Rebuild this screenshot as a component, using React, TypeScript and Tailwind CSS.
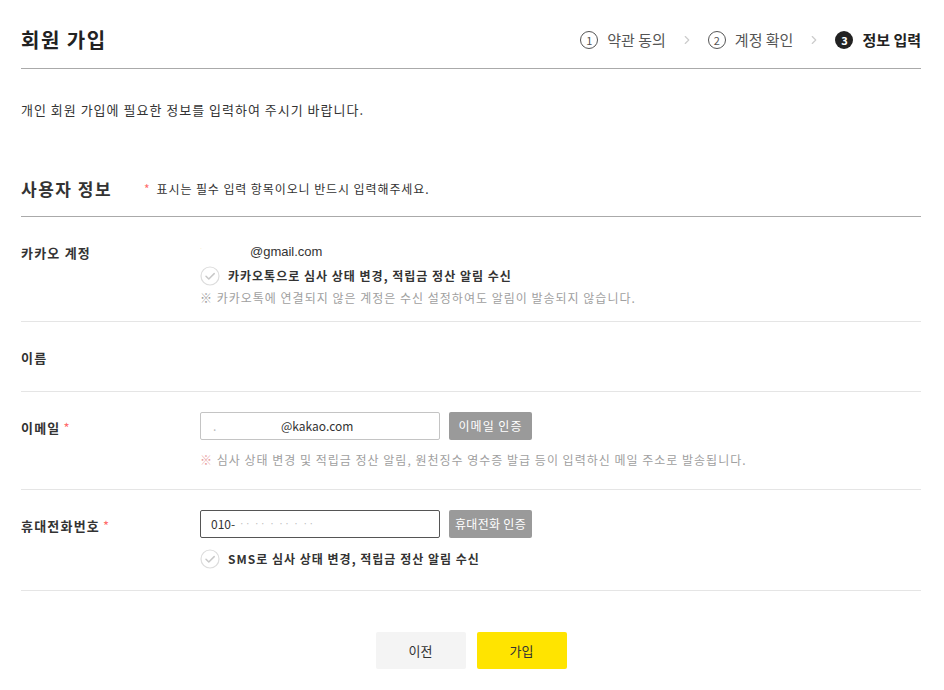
import { ChevronRight } from 'lucide-react';

const font = { fontFamily: '"Noto Sans CJK KR", "Noto Sans", sans-serif' };

function Step({ n, label, active }: { n: number; label: string; active?: boolean }) {
  return (
    <div className="flex items-center gap-[9px]">
      {active ? (
        <span className="flex h-[18px] w-[18px] items-center justify-center rounded-full bg-[#222] text-[11px] font-bold leading-none text-white">
          {n}
        </span>
      ) : (
        <span className="flex h-[18px] w-[18px] items-center justify-center rounded-full border border-[#555] text-[11px] leading-none text-[#555]">
          {n}
        </span>
      )}
      <span className={active ? 'text-[15px] font-bold text-[#222]' : 'text-[15px] text-[#555]'}>{label}</span>
    </div>
  );
}

function Check() {
  return (
    <svg width="20" height="20" viewBox="0 0 20 20" className="shrink-0">
      <circle cx="10" cy="10" r="9" fill="#fff" stroke="#ddd" strokeWidth="1.2" />
      <path d="M6 10.2l2.8 2.8L14.2 7.6" fill="none" stroke="#c8c8c8" strokeWidth="1.5" strokeLinecap="round" strokeLinejoin="round" />
    </svg>
  );
}

function Label({ children, required }: { children: React.ReactNode; required?: boolean }) {
  return (
    <div className="w-[179px] shrink-0 text-[13px] font-bold tracking-[1.2px] text-[#333]">
      {children}
      {required && <span className="ml-[3px] font-normal text-[#ff6b6b]">*</span>}
    </div>
  );
}

export default function App() {
  return (
    <div className="min-h-[690px] bg-white px-[21px] text-[#333]" style={font}>
      <div className="w-[900px]">
        {/* header */}
        <div className="flex items-center justify-between border-b border-[#aaa] pt-[26px] pb-[14px] leading-[28px]">
          <h1 className="text-[20px] font-bold tracking-[1.5px] text-[#222]">회원 가입</h1>
          <div className="flex items-center">
            <Step n={1} label="약관 동의" />
            <ChevronRight size={14} className="mx-[14px] text-[#ccc]" />
            <Step n={2} label="계정 확인" />
            <ChevronRight size={14} className="mx-[14px] text-[#ccc]" />
            <Step n={3} label="정보 입력" active />
          </div>
        </div>

        <p className="mt-[32px] text-[13px] leading-[18px] tracking-[1px] text-[#333]">개인 회원 가입에 필요한 정보를 입력하여 주시기 바랍니다.</p>

        {/* section title */}
        <div className="mt-[58px] flex items-center border-b border-[#aaa] pb-[15px] leading-[24px]">
          <h2 className="w-[123px] text-[17px] font-bold tracking-[1.5px] text-[#333]">사용자 정보</h2>
          <span className="text-[12px] tracking-[0.9px] text-[#333]">
            <span className="mr-[6px] text-[#ff6b6b]">*</span>표시는 필수 입력 항목이오니 반드시 입력해주세요.
          </span>
        </div>

        {/* kakao account */}
        <div className="flex border-b border-[#e5e5e5] pt-[26px] pb-[14px]">
          <div className="w-[179px] shrink-0 pt-[1px] text-[13px] font-bold leading-[18px] tracking-[1.2px] text-[#333]">카카오 계정</div>
          <div className="flex flex-col">
            <div className="flex h-[18px] items-center text-[13px] text-[#333]" style={{ fontFamily: '"Liberation Sans", "Noto Sans CJK KR", sans-serif' }}>
              <span className="w-[50px] self-start pt-[2px] text-[6px] leading-none text-[#f5e6a8]">·</span>
              @gmail.com
            </div>
            <div className="mt-[5px] flex h-[20px] items-center gap-[8px]">
              <Check />
              <span className="text-[12px] font-bold tracking-[1px] text-[#333]">카카오톡으로 심사 상태 변경, 적립금 정산 알림 수신</span>
            </div>
            <p className="mt-[3px] text-[12px] leading-[18px] tracking-[1px] text-[#a0a0a0]">※ 카카오톡에 연결되지 않은 계정은 수신 설정하여도 알림이 발송되지 않습니다.</p>
          </div>
        </div>

        {/* name */}
        <div className="flex border-b border-[#e5e5e5] pt-[27px] pb-[24px] leading-[18px]">
          <Label>이름</Label>
        </div>

        {/* email */}
        <div className="flex border-b border-[#e5e5e5] pt-[20px] pb-[20px]">
          <div className="flex h-[28px] items-center pt-[3px]">
            <Label required>이메일</Label>
          </div>
          <div className="flex flex-col">
            <div className="flex items-center gap-[9px]">
              <div className="flex h-[28px] w-[240px] items-center rounded-[2px] border border-[#c4c4c4] pl-[12px] text-[12px] text-[#333]">
                <span className="w-[68px] text-[#bbb]">.</span>
                <span>@kakao.com</span>
              </div>
              <button className="h-[28px] w-[83px] rounded-[2px] bg-[#9a9a9a] text-[12px] tracking-[1px] text-white">이메일 인증</button>
            </div>
            <p className="mt-[11px] text-[12px] leading-[18px] tracking-[1px] text-[#a0a0a0]">
              <span className="text-[#e8a0a0]">※</span> 심사 상태 변경 및 적립금 정산 알림, 원천징수 영수증 발급 등이 입력하신 메일 주소로 발송됩니다.
            </p>
          </div>
        </div>

        {/* phone */}
        <div className="flex border-b border-[#e5e5e5] pt-[20px] pb-[21px]">
          <div className="flex h-[28px] items-center pt-[3px]">
            <Label required>휴대전화번호</Label>
          </div>
          <div className="flex flex-col">
            <div className="flex items-center gap-[9px]">
              <div className="flex h-[28px] w-[240px] items-center rounded-[2px] border border-[#555] pl-[10px] text-[12px] text-[#333]">
                <span>010-</span>
                <span className="ml-[4px] text-[9px] tracking-[1px] text-[#bbb]">·· ·· · ·· · ··</span>
              </div>
              <button className="h-[28px] w-[83px] rounded-[2px] bg-[#9a9a9a] text-[12px] tracking-[0.3px] text-white">휴대전화 인증</button>
            </div>
            <div className="mt-[11px] flex h-[20px] items-center gap-[8px]">
              <Check />
              <span className="text-[12px] font-bold tracking-[1px] text-[#333]">SMS로 심사 상태 변경, 적립금 정산 알림 수신</span>
            </div>
          </div>
        </div>

        {/* buttons */}
        <div className="mt-[41px] flex justify-center gap-[11px]">
          <button className="h-[37px] w-[90px] rounded-[2px] bg-[#f4f4f4] text-[13px] text-[#333]">이전</button>
          <button className="h-[37px] w-[90px] rounded-[2px] bg-[#ffe400] text-[13px] text-[#333]">가입</button>
        </div>
      </div>
    </div>
  );
}
